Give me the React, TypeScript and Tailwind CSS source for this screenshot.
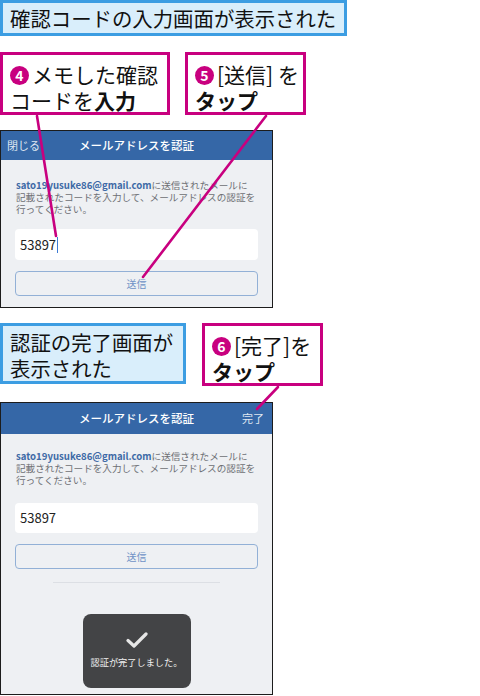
import React from "react";

/* ---------------- SMALL PARTS ---------------- */

const Num = ({ n }: { n: string }) => (
  <span className="inline-flex items-center justify-center w-[19px] h-[19px] rounded-full bg-[#c8007f] text-white text-[14px] font-bold leading-none mr-[3px] align-[2px]">
    {n}
  </span>
);

const Callout = ({
  className,
  children,
}: {
  className: string;
  children: React.ReactNode;
}) => (
  <div
    className={`border-[3px] border-[#c8007f] bg-white px-[7px] pt-[6px] text-[21px] leading-[26px] text-[#111] whitespace-nowrap ${className}`}
  >
    {children}
  </div>
);

const Label = ({
  className,
  children,
}: {
  className: string;
  children: React.ReactNode;
}) => (
  <div
    className={`border-[3px] border-[#3c9de2] bg-[#d9eefb] px-[7px] text-[20.4px] text-[#111] whitespace-nowrap ${className}`}
  >
    {children}
  </div>
);

const BodyText = () => (
  <p className="px-[15px] text-[9.6px] leading-[12px] text-[#6d6f73] whitespace-nowrap">
    <span className="font-semibold text-[#3d6aa6]">sato19yusuke86@gmail.com</span>
    に送信されたメールに
    <br />
    記載されたコードを入力して、メールアドレスの認証を
    <br />
    行ってください。
  </p>
);

const CodeInput = ({ cursor, className }: { cursor?: boolean; className: string }) => (
  <div
    className={`mx-[14px] bg-white rounded-[4px] flex items-center px-[5px] text-[13px] text-[#222] ${className}`}
  >
    53897
    {cursor && <span className="w-[1px] h-[16px] bg-[#3d7bd4] ml-[1px]" />}
  </div>
);

const SendButton = ({ className }: { className: string }) => (
  <div
    className={`mx-[14px] h-[25px] rounded-[4px] border border-[#92b0d6] flex items-center justify-center text-[10px] text-[#6f92c6] ${className}`}
  >
    送信
  </div>
);

/* ---------------- PAGE ---------------- */

export default function App() {
  return (
    <div
      className="relative w-[480px] h-[696px] bg-white overflow-hidden"
      style={{ fontFamily: '"Noto Sans CJK JP", "Noto Sans", sans-serif' }}
    >
      <div className="flex flex-col items-start">
        {/* top label */}
        <Label className="w-[347px] h-[36px] flex items-center leading-none">
          確認コードの入力画面が表示された
        </Label>

        {/* callouts 4 & 5 */}
        <div className="mt-[16px] flex gap-[15px]">
          <Callout className="w-[170px] h-[63px]">
            <Num n="4" />
            メモした確認
            <br />
            コードを<b>入力</b>
          </Callout>
          <Callout className="w-[121px] h-[63px]">
            <Num n="5" />
            [送信] を
            <br />
            <b>タップ</b>
          </Callout>
        </div>

        {/* screen 1 */}
        <div className="mt-[15px] w-[273px] h-[178px] border border-[#1c1c1c] bg-[#eef0f3] flex flex-col">
          <div className="relative h-[29px] bg-[#3567a7] flex items-center justify-center text-white">
            <span className="absolute left-[6px] text-[11px] text-[#dfe6f1]">閉じる</span>
            <span className="text-[11.5px] font-medium">メールアドレスを認証</span>
          </div>
          <div className="pt-[19px]">
            <BodyText />
            <CodeInput cursor className="mt-[14px] h-[31px]" />
            <SendButton className="mt-[11px]" />
          </div>
        </div>

        {/* label 2 & callout 6 */}
        <div className="mt-[15px] flex items-start">
          <Label className="w-[186px] h-[61px] leading-[26px] pt-[3px]">
            認証の完了画面が
            <br />
            表示された
          </Label>
          <Callout className="ml-[16px] w-[121px] h-[63px]">
            <Num n="6" />
            [完了]を
            <br />
            <b>タップ</b>
          </Callout>
        </div>

        {/* screen 2 */}
        <div className="mt-[16px] w-[273px] h-[293px] border border-[#1c1c1c] bg-[#eef0f3] flex flex-col">
          <div className="relative h-[31px] bg-[#3567a7] flex items-center justify-center text-white">
            <span className="text-[11.5px] font-medium">メールアドレスを認証</span>
            <span className="absolute right-[8px] text-[11px] text-[#dfe6f1]">完了</span>
          </div>
          <div className="pt-[16px] flex flex-col">
            <BodyText />
            <CodeInput className="mt-[17px] h-[30px]" />
            <SendButton className="mt-[11px]" />
            <div className="mt-[13px] mx-[52px] h-[1px] bg-[#dcdfe4]" />
            <div className="mt-[31px] self-center w-[108px] h-[74px] rounded-[8px] bg-[#434446] flex flex-col items-center">
              <svg width="22" height="16" viewBox="0 0 22 16" className="mt-[18px]">
                <path
                  d="M2 8.5 L8 14 L20 2"
                  fill="none"
                  stroke="#e6e6e6"
                  strokeWidth="3.2"
                  strokeLinecap="round"
                  strokeLinejoin="round"
                />
              </svg>
              <span className="mt-[8px] text-[9.2px] text-[#f2f2f2]">認証が完了しました。</span>
            </div>
          </div>
        </div>
      </div>

      {/* leader lines */}
      <svg className="absolute inset-0 pointer-events-none" width="480" height="696">
        <g stroke="#c8007f" strokeWidth="2.6" strokeLinecap="round">
          <line x1="37" y1="116" x2="56" y2="236" />
          <line x1="266" y1="116" x2="143" y2="277" />
          <line x1="278" y1="387" x2="257" y2="409" />
        </g>
      </svg>
    </div>
  );
}
